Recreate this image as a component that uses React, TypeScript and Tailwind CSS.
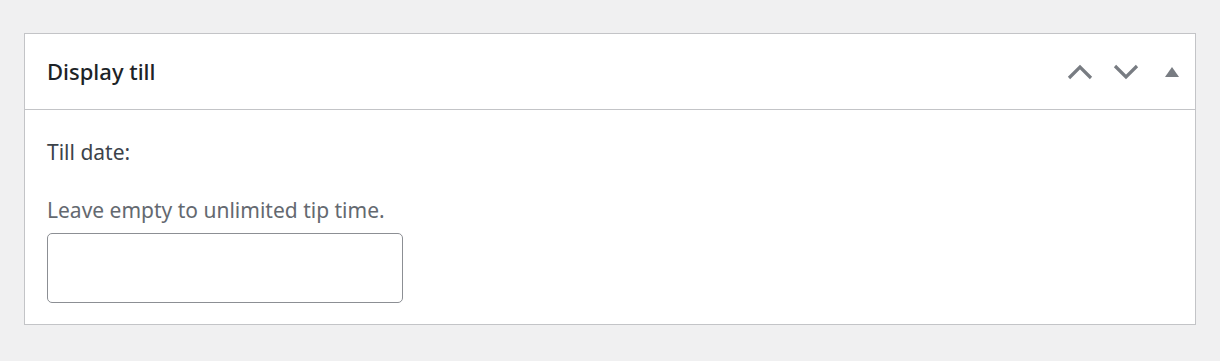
export default function App() {
  return (
    <div className="min-h-[361px] bg-[#f0f0f1] px-[24px] pt-[33px] pb-[37px] font-['Noto_Sans',sans-serif]">
      <div className="border border-[#c3c4c7] bg-white">
        {/* header */}
        <div className="flex h-[76px] items-center justify-between border-b border-[#c3c4c7] pl-[22px]">
          <h2 className="text-[22px] font-medium text-[#1d2327]">Display till</h2>
          <div className="flex items-center text-[#787c82]">
            <button className="flex h-[46px] w-[46px] items-center justify-center">
              <svg width="26" height="16" viewBox="0 0 26 16" fill="none" stroke="currentColor" strokeWidth="3.2">
                <path d="M2 14 L13 3 L24 14" />
              </svg>
            </button>
            <button className="flex h-[46px] w-[46px] items-center justify-center">
              <svg width="26" height="16" viewBox="0 0 26 16" fill="none" stroke="currentColor" strokeWidth="3.2">
                <path d="M2 2 L13 13 L24 2" />
              </svg>
            </button>
            <button className="flex h-[46px] w-[46px] items-center justify-center">
              <svg width="16" height="10" viewBox="0 0 16 10" fill="currentColor">
                <path d="M8 0 L15 10 L1 10 Z" />
              </svg>
            </button>
          </div>
        </div>
        {/* body */}
        <div className="px-[22px] pt-[27px] pb-[21px]">
          <p className="text-[21px] leading-[30px] text-[#3c434a]">Till date:</p>
          <p className="mt-[28px] text-[21px] leading-[30px] text-[#646970]">Leave empty to unlimited tip time.</p>
          <input
            type="text"
            className="mt-[8px] block h-[70px] w-[356px] rounded-[5px] border border-[#8c8f94] bg-white px-3"
          />
        </div>
      </div>
    </div>
  );
}
